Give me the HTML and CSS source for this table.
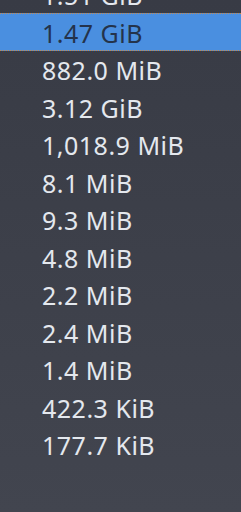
FILE: index.html
```html
<!DOCTYPE html>
<html lang="en">
<head>
    <meta charset="UTF-8">
    <meta name="viewport" content="width=device-width, initial-scale=1.0">
    <title>Sizes</title>
    <link rel="stylesheet" href="styles.css">
</head>
<body>
    <div id="column">
        <ul id="sizes">
            <li>1.51 GiB</li>
            <li class="selected">1.47 GiB</li>
            <li>882.0 MiB</li>
            <li>3.12 GiB</li>
            <li>1,018.9 MiB</li>
            <li>8.1 MiB</li>
            <li>9.3 MiB</li>
            <li>4.8 MiB</li>
            <li>2.2 MiB</li>
            <li>2.4 MiB</li>
            <li>1.4 MiB</li>
            <li>422.3 KiB</li>
            <li>177.7 KiB</li>
        </ul>
    </div>
</body>
</html>
```

FILE: styles.css
```css
body, html {
    margin: 0;
    padding: 0;
    height: 100%;
    overflow: hidden;
    font-family: 'Noto Sans', 'Open Sans', sans-serif;
}
#column {
    height: 512px;
    overflow: hidden;
    background: linear-gradient(to bottom, #383b45, #42454f);
}
#sizes {
    list-style-type: none;
    margin: -24.5px 0 0 0;
    padding: 0;
}
#sizes li {
    box-sizing: border-box;
    height: 37.5px;
    line-height: 37.5px;
    padding: 1.5px 0 0 42px;
    font-size: 25px;
    letter-spacing: 0.5px;
    color: #e4e8ee;
    white-space: nowrap;
}
#sizes li.selected {
    background-color: #4a8fe0;
    color: #24334b;
    border-top: 1px dotted #c98a4a;
    border-bottom: 1px dotted #c98a4a;
    line-height: 35.5px;
}
```
